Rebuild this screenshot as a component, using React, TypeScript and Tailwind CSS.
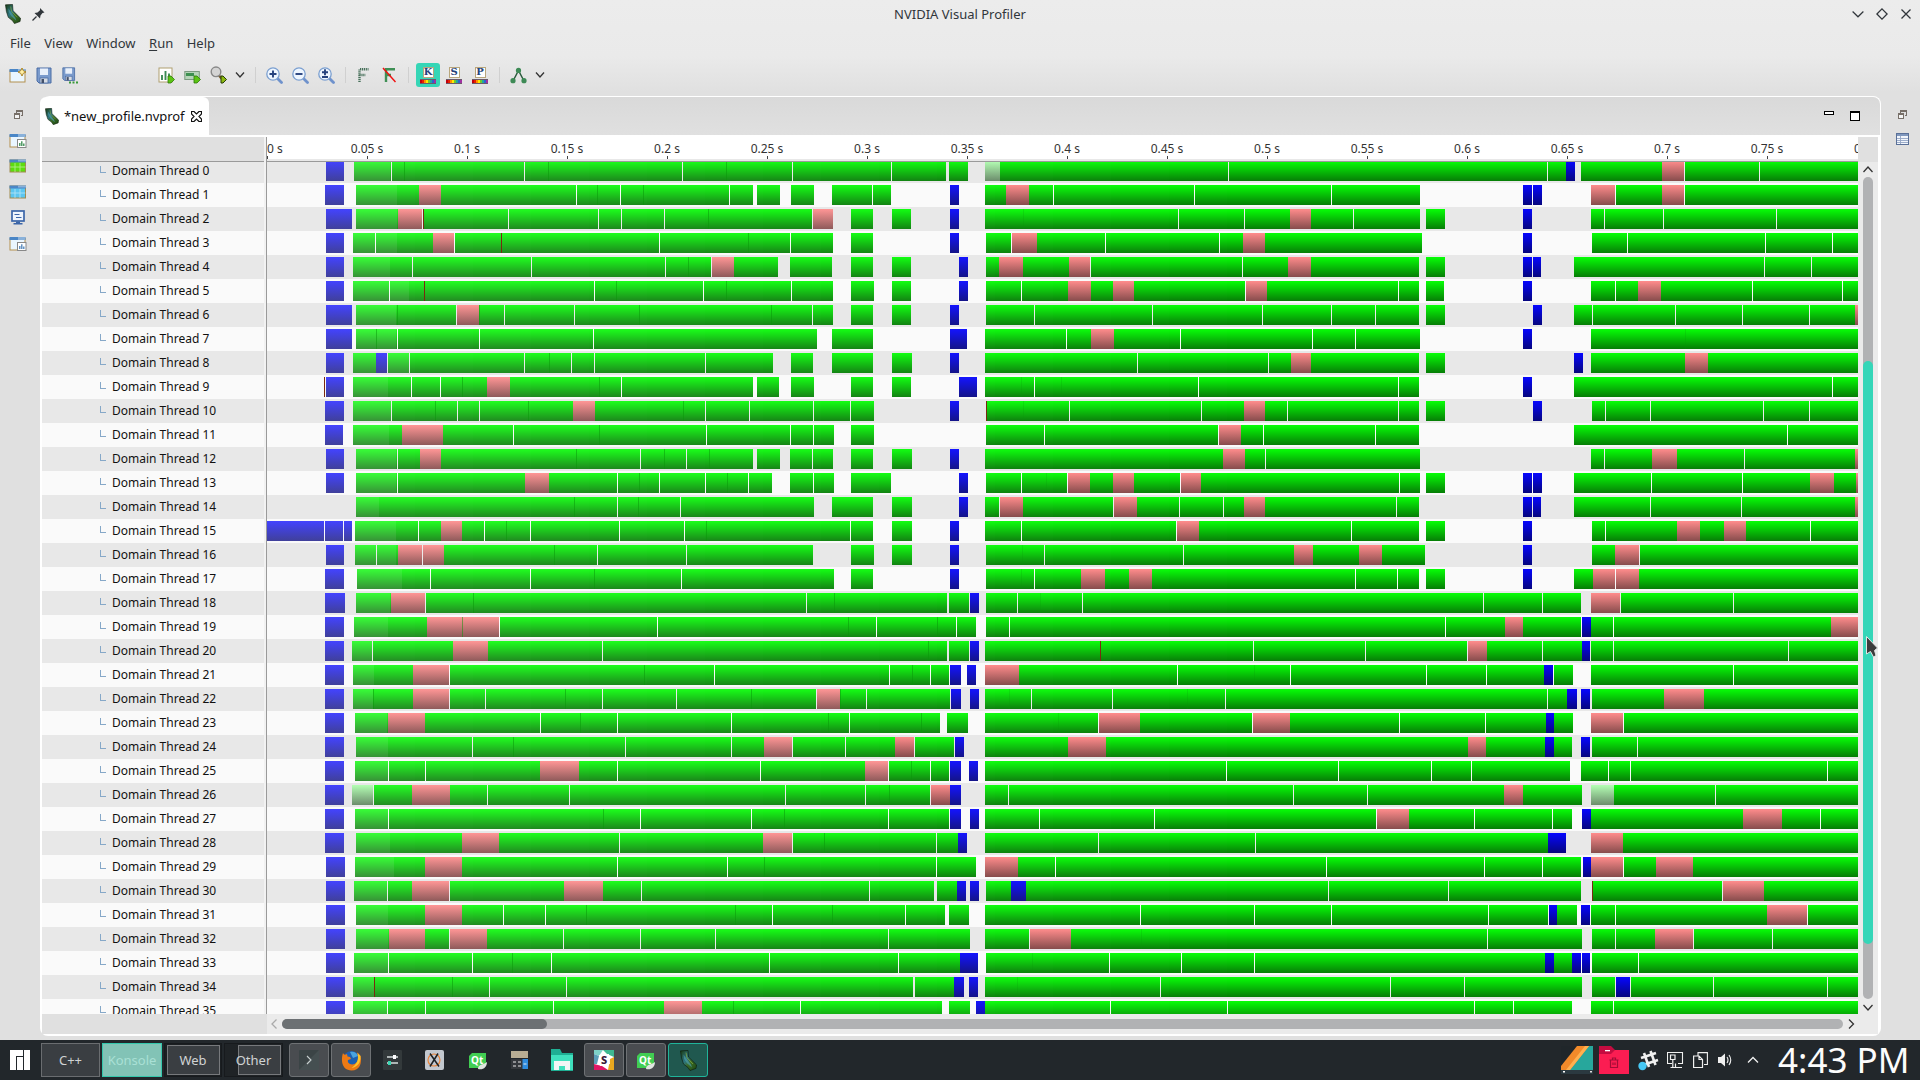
import React from "react";

type Shape = { kind: string; a: number; b: number };

/* Timeline traces. Every thread has two halves, sampled at different densities.
   g/b/p/w a-b : kernel, transfer, sync and idle spans; |a : gap; :a : seam; ra : marker; ~a : end of the pale lead-in */
const FIRST: string[] = [
  "b142-180 g202-1473 g1480-1521 w1557-1580 |283 |568 |908 |1144 |1357 :310 :620 :1002 ~281",
  "b140-180 g206-1059 g1068-1117 g1141-1190 g1229-1355 b1482-1501 p342-389 |680 |774 |1008 |1316 :725 :824 ~296",
  "b142-198 g206-1231 p296-348 p1188-1231 g1269-1317 g1358-1398 b1482-1501 |349 r351 |534 |727 |776 |869 |1187 :963 ~296",
  "b142-180 g200-1231 p372-417 g1269-1317 b1482-1501 |248 |418 r519 |858 |1140 :1049 ~296",
  "b142-180 g200-1113 p971-1018 g1138-1229 g1269-1317 g1358-1398 b1501-1521 |327 |583 |871 |970 :920 ~281",
  "b142-180 g200-1231 g1269-1319 g1358-1398 b1501-1521 |278 r353 |718 |953 |1142 :766 :1002 ~322",
  "b142-198 g206-1231 p423-471 g1269-1317 g1358-1398 b1482-1501 |422 |525 |676 |1187 :472 :815 :1099 :295 ~294",
  "b142-198 g206-1196 g1229-1317 b1482-1519 :250 |295 |472 |716 ~294",
  "b142-180 g200-1102 b249-273 g1141-1188 g1229-1317 g1358-1400 b1482-1501 |274 |321 |568 :622 |669 |718 |957 ~321",
  "b142-180 g200-1059 p488-537 g1068-1115 g1141-1190 g1269-1317 g1358-1398 b1501-1540 r138 |325 |388 :435 :729 |777 ~277",
  "b140-180 g200-1319 p672-720 b1482-1501 |283 :377 |424 |472 :577 :910 |957 |1051 |1189 |1268 ~282",
  "b140-178 g200-1233 p305-394 g1269-1319 |545 :729 |959 |1139 |1189 ~279",
  "b142-180 g206-1059 p343-389 g1068-1117 g1138-1231 g1269-1317 g1358-1400 b1482-1501 |295 :680 |817 :869 |916 :966 |1187 ~294",
  "b142-180 g206-1100 p570-621 g1138-1233 g1269-1355 b1501-1521 |295 |768 :815 |858 |957 :1004 |1049 |1189 ~294",
  "g206-1190 g1229-1317 g1358-1400 b1501-1521 :675 |768 :813 |903 ~256",
  "b15-198 g204-1317 p389-434 g1358-1400 b1482-1501 |138 |179 |341 |482 :529 |581 |772 |912 :959 |1268 ~294",
  "b142-180 g204-1188 p296-396 g1269-1319 g1358-1400 b1482-1501 |250 |349 :632 |725 |916 ~294",
  "b140-180 g208-1233 g1269-1317 b1482-1501 |366 |581 :718 |905 ~307",
  "b140-183 g206-1476 p281-354 g1480-1523 b1525-1544 |356 :459 |1174 :1234 ~281",
  "b140-180 g202-1538 p358-513 :435 |515 |854 :1264 |1324 :1455 |1496 ~277",
  "b140-180 g198-1476 p415-490 g1480-1523 b1525-1544 |242 |736 :1436 ~242",
  "b140-180 g200-1480 p328-406 b1482-1506 b1519-1538 |407 :826 |976 |1352 :1402 |1440 ~245",
  "b140-180 g200-1482 p329-406 p1196-1246 b1484-1506 b1525-1544 :244 |407 |484 :656 |736 |895 :1056 |1195 :1247 |1303 ~244",
  "b140-180 g204-1461 p274-354 g1476-1521 |602 :688 |768 |1013 :1221 |1266 :1421 ~274",
  "b140-180 g206-1491 p1083-1143 p1364-1405 b1493-1512 |457 :544 |785 |1013 |1144 |1258 |1406 ~277",
  "b140-180 g204-1480 p601-685 p1300-1349 b1482-1506 b1523-1542 |276 |356 |768 |1075 |1350 :1399 |1440 ~276",
  "b140-180 w198-243 g243-1440 p326-408 p1441-1482 b1482-1506 |244 |489 |665 |1129 |1301 :1352 |1440 ~200",
  "b140-180 g204-1480 b1482-1506 b1525-1544 |276 :738 |817 |1056 :1127 |1350 ~276",
  "b140-180 g206-1499 p434-513 p1080-1143 b1499-1519 |772 |1144 :1213 |1453 ~281",
  "b142-183 g204-1538 p354-434 |768 |1004 :1084 |1453 ~288",
  "b142-183 g202-1448 p326-406 p653-737 g1454-1497 b1497-1516 b1525-1544 |274 |407 |819 |1309 ~274",
  "b142-183 g206-1471 p354-434 g1480-1523 |523 |613 :701 :1021 |1101 :1230 |1386 ~277",
  "b142-183 g206-1525 p277-355 p408-488 |407 |652 |817 |978 |1350 ~277",
  "b142-183 g202-1504 b1504-1542 |276 |456 :542 |626 |1094 |1371 ~276",
  "b142-183 g200-1403 g1407-1491 b1491-1512 b1523-1542 r246 :413 |493 |658 ~246",
  "b142-183 g200-1465 p868-949 g1480-1525 b1538-1557 |274 |355 |630 :1017 |1161 ~274",
];

const SECOND: string[] = [
  "w26-51 g51-1016 b1016-1031 g1041-1513 p1179-1217 |440 |984 |1218 |1345",
  "g26-767 p61-101 b943-958 b960-975 g1058-1513 p1058-1099 p1179-1217 |142 |382 |616 |1100 |1218",
  "g26-767 p545-581 g777-810 b943-958 g1058-1513 |355 |468 |653 |1081 |1182 |1374 ;91",
  "g27-770 p72-114 p465-503 b943-958 g1060-1513 |71 |231 |425 |1120 |1356 |1470",
  "g27-765 p50-90 p169-205 p542-581 g777-810 b943-958 b960-973 g1029-1513 |206 |464 |1354 |1434",
  "g27-765 p167-206 p244-280 p470-506 g777-808 b943-958 g1058-1513 p1139-1178 |88 |469 |730 |1100 |1334 |1487",
  "g27-765 g777-810 b960-975 g1029-1513 p1508-1513 |110 |311 |498 |616 |691 |1061 |1202 |1316 |1431",
  "g26-767 p206-245 b943-958 g1058-1513 |164 |359 |584 |657 ;1220",
  "g26-765 p547-581 g777-810 b1029-1045 g1058-1513 p1219-1258 |285 |509",
  "g26-765 b943-958 g1029-1513 |110 |389 |730 |1470 ;88 ;156",
  "g27-765 p467-503 g777-810 b960-975 g1060-1513 r28 |169 |394 |541 |730 |1083 |1160 |1352 |1431 ;91",
  "g27-765 p424-462 g1029-1513 |127 |423 |500 |691 |1393",
  "g26-767 p431-469 g1058-1513 p1162-1205 p1508-1513 |503 |1081 |1320",
  "g27-767 p167-205 p244-280 p360-394 g777-810 b943-958 b960-975 g1029-1513 p1432-1473 p1510-1513 |88 |166 |359 |732 |1161 |1316 ;130",
  "g26-765 p51-90 p245-285 p467-503 b943-958 b960-973 g1029-1513 p1508-1513 |50 |244 |357 |432 |727 |1160 |1315",
  "g26-765 p353-390 g777-810 b943-958 g1060-1513 p1205-1244 p1285-1323 |88 |352 |650 |1083 |1432",
  "g27-775 p552-585 p663-702 b943-958 g1060-1513 p1099-1140 |127 |364 |1141 ;90",
  "g27-765 p190-230 p271-310 g777-810 b943-958 g1029-1513 p1062-1140 |110 |657 |728 |1100 ;88",
  "g27-1041 g1058-1513 p1058-1108 |81 |192 |875 |976 |1109 |1301 ;120",
  "g27-1041 p912-943 b1043-1058 g1058-1513 p1467-1513 |67 |810 |1097",
  "g26-1043 p849-881 b1043-1057 g1058-1513 r222 |483 |674 |848 |976 |1097 |1395",
  "g26-1028 p26-84 b978-994 g1058-1513 |354 |546 |778 |880 |995 |1301 ;485",
  "g26-1017 b1017-1035 b1041-1057 g1060-1513 p1183-1251 |105 |243 |435 |984 ;67 ;371",
  "g26-1028 p220-290 p482-546 b982-995 g1058-1513 p1058-1113 |219 |481 |732 |879 |1114 ;150",
  "g26-1026 p167-232 p848-879 b980-995 b1041-1057 g1060-1513 |1138",
  "g26-1023 g1041-1513 |438 |628 |786 |855 |1088 |1126 |1461",
  "g26-1043 p910-943 w1058-1098 g1098-1513 |65 |551 |677 |1270",
  "g26-1026 p694-748 b1043-1058 g1058-1513 p1317-1384 |118 |314 |693 |860 |993 |1449",
  "g26-985 b985-1016 g1058-1513 p1058-1113 |219 |486",
  "g26-1041 p26-82 b1045-1058 g1058-1513 p1058-1113 p1169-1232 |146 |607 |877 |976 |1114",
  "g27-1041 b70-95 g1060-1513 p1283-1353 |611 |815 r1061 |1282",
  "g26-1035 b987-1000 b1041-1057 g1058-1513 p1358-1427 |290 |485 |616 |884 |986 |1100 |1428",
  "g26-1043 p102-172 g1060-1513 p1167-1232 |101 |882 |1100 |1233 |1368 ;293",
  "g27-980 b980-995 g995-1026 b1026-1041 b1043-1057 g1060-1513 |238 |360 |485 |1139 ;106",
  "g26-1043 g1060-1513 b1101-1125 |325 |717 |843 |1100 |1126 |1267 |1461 ;81",
  "g26-1026 g1058-1513 |239 |439 |860 |926 |1097",
];

const ORIGIN = 267;

function parse(src: string, start: number, density: number): Shape[] {
  return src.split(" ").map((tok) => {
    const kind = tok[0];
    const [a, b] = tok.slice(1).split("-").map(Number);
    const at = (v: number) => start - ORIGIN + v / density;
    if (b === undefined) return { kind, a: Math.floor(at(a)), b: 0 };
    return { kind, a: Math.round(at(a)), b: Math.round(at(b)) };
  });
}

/* Green fades from a soft tone at the left to a saturated one at the right. */
const STEPS = 16;
const STEP_WIDTH = 58;
const tint = (i: number) => Math.round(36 - (30 * i) / (STEPS - 1));

function greenPieces(a: number, b: number, lead: number) {
  const out: { x: number; w: number; fill: string }[] = [];
  let x = a;
  if (x < lead && b > x) {
    const e = Math.min(b, lead);
    out.push({ x, w: e - x, fill: "url(#g-lead)" });
    x = e;
  }
  for (let i = 0; i < STEPS; i++) {
    const end = i === STEPS - 1 ? 1591 : 90 + (i + 1) * STEP_WIDTH;
    if (x < end && x < b) {
      const e = Math.min(b, end);
      out.push({ x, w: e - x, fill: `url(#g${i})` });
      x = e;
    }
  }
  return out;
}

function Track({ index }: { index: number }) {
  const shapes = [
    ...parse(FIRST[index], 260, 1568 / 730),
    ...parse(SECOND[index], 970, 1568 / 920),
  ];
  const lead = shapes.find((s) => s.kind === "~")?.a ?? 0;
  const spans = shapes.filter((s) => s.b > 0);
  const marks = shapes.filter((s) => s.b === 0 && s.kind !== "~");
  const order = (k: string) => (k === "g" ? 0 : 1);
  spans.sort((m, n) => order(m.kind) - order(n.kind));
  return (
    <svg width="1591" height="24" className={index % 2 ? "block shrink-0 bg-[#fafafa]" : "block shrink-0 bg-[#e8e8e8]"} shapeRendering="crispEdges">
      {spans.map((s, i) => {
        if (s.kind === "g")
          return greenPieces(s.a, s.b, lead).map((p, j) => (
            <rect key={`${i}-${j}`} x={p.x} y="2" width={p.w} height="20" fill={p.fill} />
          ));
        const fill =
          s.kind === "p"
            ? s.a < 600 ? "url(#p0)" : "url(#p1)"
            : s.kind === "w"
              ? "url(#w)"
              : s.a < 150 ? "url(#b0)" : s.a < 800 ? "url(#b1)" : "url(#b2)";
        return <rect key={i} x={s.a} y="2" width={s.b - s.a} height="20" fill={fill} />;
      })}
      {marks.map((m, i) => (
        <rect
          key={`m${i}`}
          x={m.a}
          y="2"
          width="1"
          height="20"
          fill={m.kind === "|" ? (index % 2 ? "#fafafa" : "#ececec") : m.kind === "r" ? "#7a2a10" : "#089608"}
          opacity={m.kind === ":" ? 0.5 : m.kind === ";" ? 0.2 : 1}
        />
      ))}
    </svg>
  );
}

function Grad({ id, top, bottom }: { id: string; top: string; bottom: string }) {
  return (
    <linearGradient id={id} x1="0" y1="0" x2="0" y2="1">
      <stop offset="0" stopColor={top} />
      <stop offset="1" stopColor={bottom} />
    </linearGradient>
  );
}

function Defs() {
  return (
    <svg width="0" height="0" className="absolute">
      <defs>
        <Grad id="g-lead" top="#37ff37" bottom="#379237" />
        {Array.from({ length: STEPS }, (_, i) => {
          const c = tint(i);
          return <Grad key={i} id={`g${i}`} top={`rgb(${c},255,${c})`} bottom={`rgb(${c},${122 + Math.round(c / 2)},${c})`} />;
        })}
        <Grad id="p0" top="#ff9696" bottom="#8e5a5a" />
        <Grad id="p1" top="#ff8c8c" bottom="#864c4c" />
        <Grad id="w" top="#b4ffb4" bottom="#6c8c6c" />
        <Grad id="b0" top="#4343ff" bottom="#40409a" />
        <Grad id="b1" top="#1414ff" bottom="#141488" />
        <Grad id="b2" top="#0606ff" bottom="#06067e" />
        <linearGradient id="cal" x1="0" x2="1" y1="0" y2="1">
          <stop offset="0" stopColor="#1c3d12" />
          <stop offset=".4" stopColor="#2c7480" />
          <stop offset=".6" stopColor="#3a6a28" />
          <stop offset="1" stopColor="#1d4a12" />
        </linearGradient>
      </defs>
    </svg>
  );
}

function California({ w = 17, h = 24 }: { w?: number; h?: number }) {
  return (
    <svg width={w} height={h} viewBox="0 0 17 24" preserveAspectRatio="none" className="block shrink-0">
      <path d="M.5 1 8 0.5 8.5 8 16.500 17 16 21 10 23.500 8 20 3.500 16 1.500 9Z" fill="url(#cal)" stroke="#0d1c0c" strokeWidth=".7" />
      <path d="M3.5 5 6.5 10 11 16.500 12 20 7 15 4 10Z" fill="#4c9aa6" opacity=".7" />
      <path d="M6 3 7 9 13 16" stroke="#8fae3a" strokeWidth="1" fill="none" opacity=".7" />
    </svg>
  );
}

function Chevron({ className = "" }: { className?: string }) {
  return (
    <svg width="10" height="8" viewBox="0 0 10 8" className={className}>
      <path d="M1 1.5 5 6 9 1.5" fill="none" stroke="#333" strokeWidth="1.3" />
    </svg>
  );
}

function Separator() {
  return <div className="h-4 w-px bg-[#d0d0d0]" />;
}

function Slot({ w, children }: { w: number; children?: React.ReactNode }) {
  return (
    <div className="flex h-6 shrink-0 items-center justify-center" style={{ width: w }}>
      {children}
    </div>
  );
}

const G = "#3d8a55";

function WindowIcon({ badge }: { badge?: "star" | "chart" | "bars" }) {
  return (
    <svg width="18" height="15" viewBox="0 0 18 15">
      <rect x="1" y="2.5" width="15" height="11.5" fill="#eaf6ff" stroke="#b3904e" />
      <rect x=".5" y="1" width="16" height="3" fill="#4a86c6" />
      <rect x="9" y="1" width="7" height="3" fill="#b4cfe8" opacity=".6" />
      {badge === "star" && <path d="M13 0 14.3 2.7 17 4 14.3 5.3 13 8 11.7 5.3 9 4 11.7 2.7Z" fill="#fff0a8" stroke="#a77a14" strokeWidth=".9" />}
      {(badge === "chart" || badge === "bars") && (
        <>
          <rect x="8.5" y="6.5" width="8.5" height="8" fill="#fff" stroke="#888" />
          <path d="M10.8 13V10M12.8 13V8.3M14.8 13V10.5" stroke={badge === "chart" ? "#348a4c" : "#4a80b8"} strokeWidth="1.3" />
        </>
      )}
    </svg>
  );
}

function SaveIcon({ dots = false }: { dots?: boolean }) {
  return (
    <svg width="17" height="17" viewBox="0 0 17 17">
      <g transform={dots ? "scale(.84)" : undefined}>
        <path d="M1 1H15V16H3L1 14Z" fill="#7b9bcc" stroke="#4a6ca4" />
        <rect x="4" y="1.5" width="8" height="6.5" fill="#e9f0fa" />
        <rect x="4" y="11" width="8" height="5" fill="#d7dce4" stroke="#4a6ca4" strokeWidth=".8" />
        <rect x="5.5" y="12" width="2.5" height="4" fill="#42506a" />
      </g>
      {dots && <path d="M7 15.5h2M10.5 15.5h2M14 15.5h2" stroke="#3a9a3a" strokeWidth="2" />}
    </svg>
  );
}

function RunBadge() {
  return <path d="M10 9 H13 L16.5 12.5 13 16 H10Z" fill="#5cc414" stroke="#2f7a0a" strokeWidth=".8" />;
}

function Magnifier({ sign }: { sign: string }) {
  return (
    <svg width="17" height="17" viewBox="0 0 17 17">
      <path d="M11.5 11.5 15.5 15.5" stroke="#6f92cc" strokeWidth="2.8" strokeLinecap="round" />
      <circle cx="7" cy="7" r="6.2" fill="#eef6ff" stroke="#7b9fd0" strokeWidth="1.3" />
      <path d={sign} stroke="#26427e" strokeWidth="1.9" fill="none" />
    </svg>
  );
}

const STRIPES = ["#c00010", "#e82000", "#ff9000", "#ffe800", "#70c830", "#20a8a0", "#3060d0", "#a030a0"];

function ColorMode({ letter }: { letter: string }) {
  return (
    <div className="flex flex-col items-center">
      <div className="flex h-[11px] w-[11px] items-center justify-center border border-[#b8a67c] bg-white font-['DejaVu_Serif'] text-[10px] leading-none font-bold text-[#24427c]">
        {letter}
      </div>
      <svg width="16" height="5" className="mt-px block" shapeRendering="crispEdges">
        <rect width="16" height="5" fill="#6a5a6a" />
        {STRIPES.map((c, i) => (
          <rect key={c} x={i * 2} y="1" width="2" height="3" fill={c} />
        ))}
      </svg>
    </div>
  );
}

function Toolbar() {
  return (
    <div className="flex h-9 items-center pl-[9px]">
      <Slot w={18}><WindowIcon badge="star" /></Slot>
      <Slot w={9} />
      <Slot w={17}><SaveIcon /></Slot>
      <Slot w={8} />
      <Slot w={19}><SaveIcon dots /></Slot>
      <Slot w={77} />
      <Slot w={18}>
        <svg width="17" height="17" viewBox="0 0 17 17">
          <rect x="1" y="1" width="13" height="14" fill="#fff" stroke="#b0a070" />
          <path d="M4 13V8M7.5 13V4M11 13V6.5" stroke={G} strokeWidth="1.9" />
          <RunBadge />
        </svg>
      </Slot>
      <Slot w={8} />
      <Slot w={18}>
        <svg width="17" height="17" viewBox="0 0 17 17">
          <rect x=".8" y="4.5" width="14.500" height="8" fill="#b6d4b8" stroke="#7c9a80" />
          <rect x="2" y="6" width="8" height="3" fill="#3d9050" />
          <RunBadge />
        </svg>
      </Slot>
      <Slot w={8} />
      <Slot w={18}>
        <svg width="17" height="18" viewBox="0 0 17 18">
          <path d="M8.500 9 12 13" stroke="#7a6030" strokeWidth="2.600" />
          <circle cx="6" cy="5.800" r="4.800" fill="#d4d4d4" stroke="#888" strokeWidth="1.400" />
          <path d="M11 10 H13 L16.500 13.500 13 17 H11Z" fill="#8cb810" stroke="#253c06" strokeWidth="1" />
        </svg>
      </Slot>
      <Slot w={8} />
      <Slot w={10}><Chevron /></Slot>
      <Slot w={10} />
      <Separator />
      <Slot w={9} />
      <Slot w={18}><Magnifier sign="M3.5 7H10.5M7 3.5V10.5" /></Slot>
      <Slot w={8} />
      <Slot w={18}><Magnifier sign="M3.5 7H10.5" /></Slot>
      <Slot w={8} />
      <Slot w={18}><Magnifier sign="M4 5.2H10M7 2.2V8.2M4 10H10" /></Slot>
      <Slot w={10} />
      <Separator />
      <Slot w={11} />
      <Slot w={12}>
        <svg width="11" height="14" viewBox="0 0 11 14">
          <path d="M1.500 14V1.200H10.500M1.500 7H7.500" fill="none" stroke="#47705a" strokeWidth="2.400" strokeDasharray="1.200 .7" />
        </svg>
      </Slot>
      <Slot w={12} />
      <Slot w={15}>
        <svg width="14" height="16" viewBox="0 0 14 16">
          <path d="M4 15V2.200H13M4 8H9" fill="none" stroke="#3f9055" strokeWidth="2.400" />
          <path d="M1 1 13.500 15" stroke="#f01010" strokeWidth="1.500" />
        </svg>
      </Slot>
      <Slot w={12} />
      <Separator />
      <Slot w={7} />
      <div className="flex h-6 w-6 items-center justify-center rounded-[3px] bg-[#35d6b6]"><ColorMode letter="K" /></div>
      <Slot w={6} />
      <Slot w={16}><ColorMode letter="S" /></Slot>
      <Slot w={10} />
      <Slot w={16}><ColorMode letter="P" /></Slot>
      <Slot w={11} />
      <Separator />
      <Slot w={10} />
      <Slot w={17}>
        <svg width="17" height="17" viewBox="0 0 17 17">
          <path d="M3 14 8.500 3.500 14 14" fill="none" stroke="#2a5a3c" strokeWidth="1.500" />
          <circle cx="8.500" cy="3.400" r="2.600" fill={G} />
          <circle cx="3" cy="13.700" r="2.600" fill={G} />
          <circle cx="14" cy="13.700" r="2.600" fill={G} />
        </svg>
      </Slot>
      <Slot w={8} />
      <Slot w={10}><Chevron /></Slot>
    </div>
  );
}

function RestoreIcon() {
  return (
    <svg width="9" height="9" viewBox="0 0 9 9" shapeRendering="crispEdges">
      <path d="M2.5 3V.5H8.5V5.5H6.5" fill="none" stroke="#776f68" />
      <rect x="2" y="0" width="7" height="2" fill="#776f68" />
      <rect x=".5" y="3.5" width="5" height="5" fill="#f4f4f4" stroke="#776f68" />
      <rect x="0" y="3" width="6" height="2" fill="#776f68" />
    </svg>
  );
}

function GridIcon({ fill }: { fill: string }) {
  return (
    <svg width="18" height="14" viewBox="0 0 18 14">
      <rect x="1" y="1" width="15.500" height="12" fill={fill} stroke="#a08c50" />
      <rect x=".5" y=".5" width="16.500" height="3" fill="#4a86c6" />
      <rect x="9" y=".5" width="8" height="2" fill="#b4cfe8" opacity=".6" />
      <path d="M1 8H16.500M6 4V13M11 4V13" stroke="#fff" strokeWidth=".9" opacity=".5" />
    </svg>
  );
}

function LeftRail() {
  return (
    <div className="flex w-10 flex-col items-center pt-[14px] pr-1">
      <RestoreIcon />
      <div className="mt-[14px] flex flex-col items-center">
        <div className="h-[26px]"><WindowIcon badge="chart" /></div>
        <div className="h-[26px]"><GridIcon fill="#5ddc10" /></div>
        <div className="h-[26px]"><GridIcon fill="#5cc6f0" /></div>
        <div className="-mt-px h-[26px]">
          <svg width="16" height="15" viewBox="0 0 16 15">
            <rect x="2" y="1" width="12" height="10" fill="#eef4fc" stroke="#3b65a8" strokeWidth="1.700" />
            <path d="M4.500 4.500H9.500M6 7.500H11.500" stroke="#3b65a8" strokeWidth="1.100" />
            <path d="M6 11.500H10V13H12.500V14.500H3.500V13H6Z" fill="#3b65a8" />
          </svg>
        </div>
        <div className="h-[26px]"><WindowIcon badge="bars" /></div>
      </div>
    </div>
  );
}

function Ruler() {
  const ticks = Array.from({ length: 17 }, (_, i) => i);
  const label = (i: number) => `${Number((i * 0.05).toFixed(2))} s`;
  return (
    <div className="flex h-[22px] overflow-hidden">
      <div className="w-[50px] shrink-0">
        <span className="mt-px block text-[12px] leading-[22px] whitespace-nowrap">0 s</span>
      </div>
      {ticks.slice(1).map((i) => (
        <div key={i} className="flex w-[100px] shrink-0 justify-center">
          <span className="mt-px text-[12px] leading-[22px] whitespace-nowrap">{label(i)}</span>
        </div>
      ))}
    </div>
  );
}

function Ticks() {
  return (
    <div className="flex h-[3px]">
      {Array.from({ length: 16 }, (_, i) => (
        <div key={i} className={i === 15 ? "h-[3px] w-[91px] shrink-0 border-l border-[#444]" : "h-[3px] w-[100px] shrink-0 border-l border-[#444]"} />
      ))}
    </div>
  );
}

function Editor() {
  const rows = Array.from({ length: 36 }, (_, i) => i);
  return (
    <div className="flex h-[940px] w-[1841px] flex-col rounded-[8px] rounded-tl-[10px] border-t border-r border-white bg-white">
      <div className="flex h-[38px] rounded-t-[7px] bg-gradient-to-b from-[#d9d9d9] to-[#e0e0e0]">
        <div className="flex h-full w-[169px] items-center rounded-t-[6px] bg-white pl-[5px] text-[#222]">
          <California w={14} h={17} />
          <span className="mt-[2px] ml-[5px] text-[13px] tracking-[-0.04px] whitespace-nowrap text-[#111]">*new_profile.nvprof</span>
          <svg width="11" height="11" viewBox="0 0 11 11" className="ml-[6px]">
            <path d="M.5.5H3L5.500 3 8 .5H10.500V3L8 5.500 10.500 8V10.500H8L5.500 8 3 10.500H.5V8L3 5.500.5 3Z" fill="#fff" stroke="#111" strokeWidth="1.200" />
          </svg>
        </div>
        <div className="ml-auto flex items-start pt-[14px] pr-[20px]">
          <div className="mr-4 h-1 w-[10px] border border-black bg-white" />
          <div className="h-[10px] w-[10px] border border-t-2 border-black bg-white" />
        </div>
      </div>
      <div className="mt-[2px] ml-[2px] flex h-[897px] w-[1836px] flex-col">
        <div className="flex h-[877px]">
          <div className="flex w-[222px] flex-col">
            <div className="h-[25px] border-b border-[#9a9a9a] bg-[#e0e0e0]" />
            <div className="h-[852px] overflow-hidden">
              <div className="-mt-[3px]">
                {rows.map((i) => (
                  <div key={i} className={i % 2 ? "flex h-6 items-center bg-[#fafafa]" : "flex h-6 items-center bg-[#e8e8e8]"}>
                    <div className="-mt-[3px] ml-[58px] h-[7px] w-[6px] border-b border-l border-[#86a8c8]" />
                    <span className="ml-[6px] text-[12px] leading-none whitespace-nowrap text-[#111]">Domain Thread {i}</span>
                  </div>
                ))}
              </div>
            </div>
          </div>
          <div className="w-[2px] bg-[#f2f2f2]" />
          <div className="w-px bg-[#9a9a9a]" />
          <div className="flex w-[1591px] flex-col overflow-hidden">
            <div className="h-[25px] border-b border-[#9a9a9a] bg-white text-[#333]">
              <div className="h-[19px]"><Ruler /></div>
              <Ticks />
              <div className="h-[2px] bg-[#e8e8e8]" />
            </div>
            <div className="h-[852px] overflow-hidden">
              <div className="-mt-[3px]">
                {rows.map((i) => <Track key={i} index={i} />)}
              </div>
            </div>
          </div>
          <div className="flex w-5 flex-col items-center bg-[#ebebeb]">
            <div className="h-[25px] w-5 bg-[#e0e0e0]" />
            <svg width="12" height="15" viewBox="0 0 12 15" className="shrink-0"><path d="M1.500 10 6 5 10.500 10" fill="none" stroke="#333" strokeWidth="1.300" /></svg>
            <div className="h-[822px] w-[10px] rounded-full bg-[#b1b2b4] pt-[184px]">
              <div className="h-[583px] rounded-full bg-[#35d6b8]" />
            </div>
            <svg width="12" height="15" viewBox="0 0 12 15" className="shrink-0"><path d="M1.500 6 6 11 10.500 6" fill="none" stroke="#333" strokeWidth="1.300" /></svg>
          </div>
        </div>
        <div className="flex h-5">
          <div className="w-[225px] bg-[#e0e0e0]" />
          <div className="flex w-[1611px] items-center bg-[#ebebeb]">
            <svg width="15" height="12" viewBox="0 0 15 12"><path d="M9.500 1.500 5 6 9.500 10.500" fill="none" stroke="#aaa" strokeWidth="1.300" /></svg>
            <div className="h-[10px] w-[1561px] rounded-full bg-[#b1b2b4]">
              <div className="h-[10px] w-[265px] rounded-full bg-[#6c7073]" />
            </div>
            <svg width="15" height="12" viewBox="0 0 15 12"><path d="M6 1.500 10.500 6 6 10.500" fill="none" stroke="#333" strokeWidth="1.300" /></svg>
          </div>
        </div>
      </div>
    </div>
  );
}

function RightRail() {
  return (
    <div className="flex w-[39px] flex-col items-center pt-[14px] pl-[4px]">
      <RestoreIcon />
      <svg width="13" height="12" viewBox="0 0 13 12" className="mt-[14px]">
        <rect x=".5" y=".5" width="12" height="11" fill="#f2f6fc" stroke="#5a7098" />
        <rect x="1" y="1" width="11" height="2" fill="#7f97bd" />
        <path d="M1 5.500H12M1 7.500H12M1 9.500H12M4.500 3V11" stroke="#93a5c4" strokeWidth=".9" />
      </svg>
    </div>
  );
}

function TaskButton({ active = false, children }: { active?: boolean; children: React.ReactNode }) {
  return (
    <div className={active ? "flex h-[34px] w-10 items-center justify-center rounded-[3px] border border-[#20b49a] bg-[#20584f]" : "flex h-[34px] w-10 items-center justify-center rounded-[3px] border border-[#6e7174] bg-[#494c50]"}>
      {children}
    </div>
  );
}

function QtIcon() {
  return (
    <svg width="20" height="20" viewBox="0 0 20 20">
      <path d="M4 3H18V14L14 18H1V6Z" fill="#41cd52" />
      <text x="3" y="14" fontFamily="Noto Sans" fontSize="10" fontWeight="700" fill="#fff">Qt</text>
      <path d="M10 19C10 14 15 15 19 12C19 17 15 20.500 10 19Z" fill="#dfe4e0" />
    </svg>
  );
}

function SlackIcon() {
  return (
    <svg width="20" height="20" viewBox="0 0 20 20">
      <rect width="20" height="20" fill="#fff" />
      <path d="M0 0H9L5 6 0 4Z" fill="#7fd3c8" />
      <path d="M9 0H20V7L13 4Z" fill="#3eb991" />
      <path d="M20 7V20H14L16 9Z" fill="#e9a820" />
      <path d="M14 20H0V14L8 16Z" fill="#e01765" />
      <path d="M0 4 5 6 3 14H0Z" fill="#5a9fb8" />
      <path d="M5 5 15 4 16 14 6 16Z" fill="#fff" />
      <text x="7" y="14" fontFamily="Noto Sans" fontSize="11" fontWeight="800" fill="#3a1838">S</text>
    </svg>
  );
}

function Taskbar() {
  return (
    <div className="flex h-10 items-center bg-[#22272b] text-[#d0d3d4]">
      <svg width="20" height="20" viewBox="0 0 20 20" className="ml-[10px]" shapeRendering="crispEdges">
        <path d="M0 0H13V6H6V20H0ZM7 7H13V20H7ZM14 0H20V20H14Z" fill="#fff" />
      </svg>
      <div className="ml-[11px] flex h-[34px] w-[59px] items-center justify-center border border-[#6a6d70] bg-[#3a3e42] pt-px text-[13px]">C++</div>
      <div className="ml-[2px] flex h-[34px] w-[60px] items-center justify-center border border-[#35c8ad] bg-[#82c3b6] pt-px text-[13px] text-[#a9e0d5]">Konsole</div>
      <div className="ml-[2px] flex h-[34px] w-[58px] items-center justify-center border border-[#171a1d] bg-[#1b1f22] text-[13px]">
        <div className="flex h-[30px] w-[53px] items-center justify-center border border-[#77797c] bg-[#3a3e42] pt-px">Web</div>
      </div>
      <div className="ml-[2px] flex h-[34px] w-[59px] items-center justify-end border border-[#171a1d] bg-[#1f2326] pr-px text-[13px]">
        <div className="flex h-[30px] w-[43px] items-center justify-center border border-[#77797c] bg-[#3a3e42]">
          <span className="mt-px -ml-[12px] leading-none">Other</span>
        </div>
      </div>
      <div className="ml-[6px] flex items-center">
        <TaskButton>
          <svg width="20" height="20" viewBox="0 0 20 20"><rect width="20" height="20" rx="1" fill="#3b4446" /><path d="M0 20 20 0V20Z" fill="#4d5759" opacity=".6" /><path d="M8 6 12 10 8 14" stroke="#c8d0d0" fill="none" strokeWidth="1.100" /></svg>
        </TaskButton>
        <div className="w-[2px]" />
        <TaskButton>
          <svg width="21" height="21" viewBox="0 0 21 21">
            <circle cx="10.500" cy="10" r="9" fill="#1d5fb0" />
            <path d="M9 2C13 1 16 3 17 6L12 8Z" fill="#49a4e0" />
            <path d="M2 3C0 9 0 20 10.500 20.500 19 20.500 21 13 19.500 6 18.500 4 17 3 16 2.500 18 7 17.500 12 13.500 14 9 15.500 6 12.500 7 10L10 9 9 7 6.500 6.500 6 4C4 5 3 5 2 3Z" fill="#ee7a14" />
            <path d="M19.500 6C20 12 17 17 10.500 18 16 14 18 10 16.500 3Z" fill="#fcc42c" />
          </svg>
        </TaskButton>
      </div>
      <svg width="19" height="20" viewBox="0 0 19 20" className="ml-[12px]"><rect width="19" height="20" rx="1" fill="#33393b" /><path d="M4 7H15M4 13H15" stroke="#d8dede" strokeWidth="1.300" /><rect x="10" y="5" width="3" height="4" fill="#fff" /><rect x="5" y="11" width="3" height="4" fill="#3bd6b4" /></svg>
      <svg width="19" height="20" viewBox="0 0 19 20" className="ml-[23px]"><rect width="19" height="20" rx="2" fill="#c3c8cf" /><circle cx="9" cy="10" r="6" fill="none" stroke="#e8833a" strokeWidth="1.200" /><path d="M5 3.500 14 16.500M13 3.500 5 16.500" stroke="#1d2124" strokeWidth="1.500" /></svg>
      <div className="ml-[24px]"><QtIcon /></div>
      <svg width="18" height="20" viewBox="0 0 18 20" className="ml-[23px]">
        <rect y="1" width="17" height="7" fill="#b8ad94" /><rect y="9" width="17" height="10" fill="#34373c" /><rect x="11.500" y="9" width="5.500" height="10" fill="#2f8de0" />
        <path d="M2 12H5M7 12H10M2 16H5M7 16H10M12.500 14H15.500" stroke="#e8e8e8" strokeWidth="1.200" />
      </svg>
      <svg width="23" height="22" viewBox="0 0 23 22" className="ml-[22px]"><path d="M0 0H9L11 4H22V22H0Z" fill="#1fae93" /><path d="M0 6H22V21H0Z" fill="#3fe0bd" /><path d="M3 21V12H19V21H14V17H8V21Z" fill="#f2f5f5" /></svg>
      <div className="ml-[10px] flex gap-[2px]">
        <TaskButton><SlackIcon /></TaskButton>
        <TaskButton><QtIcon /></TaskButton>
        <TaskButton active><California w={17} h={21} /></TaskButton>
      </div>
      <div className="ml-auto flex items-center">
        <svg width="32" height="28" viewBox="0 0 32 28"><rect width="32" height="28" fill="#20262a" /><path d="M24 0H32V24H7Z" fill="#27a79c" /><path d="M16 0H28L9 24H0V20Z" fill="#f28a2a" /><path d="M24 0H28L9 24H5Z" fill="#ffb050" /><path d="M0 24H32V28H0Z" fill="#2b3940" /><rect x="2" y="25" width="2" height="1.500" fill="#fff" /><rect x="29" y="25" width="2" height="1.500" fill="#ddd" /></svg>
        <svg width="30" height="28" viewBox="0 0 30 28" className="ml-[6px]"><path d="M0 0H12L16 4H30V28H0Z" fill="#c40c40" /><path d="M0 8H12L16 4H30V28H0Z" fill="#fb1d52" /><rect x="6" y="4" width="5" height="1.300" fill="#fff" /><path d="M10.500 14H19.500M11.500 14V21.500H18.500V14M13.500 14V12H16.500V14M14 16.500V19M16 16.500V19" stroke="#a30c36" fill="none" strokeWidth="1.200" /></svg>
        <svg width="21" height="22" viewBox="0 0 21 22" className="ml-[9px]"><g stroke="#f0f0f0" strokeWidth="2.600"><path d="M6 4 11 18M12.500 2 17.500 16M3 9 18 4M5 16 20 11" /></g><circle cx="4.500" cy="17" r="4.200" fill="#46c8f5" /></svg>
        <svg width="17" height="17" viewBox="0 0 17 17" className="ml-[8px]"><path d="M5 11.500H.5V.5H15.500V11.500H11" fill="none" stroke="#f0f0f0" strokeWidth="1.100" /><path d="M3.500 3H8V7.500H3.500ZM5.800 7.500V15.500M3.500 15.500H8M8.500 11.500V15.500H15" fill="none" stroke="#f0f0f0" strokeWidth="1.200" /></svg>
        <svg width="15" height="17" viewBox="0 0 15 17" className="ml-[9px]"><path d="M5 4V.6H14.400V12.500H11" fill="none" stroke="#f0f0f0" strokeWidth="1.100" /><path d="M.6 4H6L9.500 7.500V15.500H.6ZM6 4V7.500H9.500" fill="none" stroke="#f0f0f0" strokeWidth="1.200" /></svg>
        <svg width="14" height="14" viewBox="0 0 14 14" className="ml-[10px]"><path d="M0 4H3L7 .5V13.500L3 10H0Z" fill="#f0f0f0" /><path d="M9 4Q11 7 9 10M11 2Q14.500 7 11 12" stroke="#f0f0f0" fill="none" strokeWidth="1.100" /></svg>
        <svg width="12" height="8" viewBox="0 0 12 8" className="ml-[15px]"><path d="M1 6.500 6 1.500 11 6.500" fill="none" stroke="#f0f0f0" strokeWidth="1.300" /></svg>
        <span className="mr-[14px] ml-[19px] w-[128px] text-[35px] leading-10 whitespace-nowrap text-[#fcfcfc]">4:43 PM</span>
      </div>
    </div>
  );
}

export default function App() {
  return (
    <div className="relative flex h-[1080px] w-[1920px] flex-col overflow-hidden bg-[#e0e0e0] font-['Noto_Sans',sans-serif] text-[13px] text-[#31363b]">
      <Defs />
      <div className="flex h-24 flex-col bg-[linear-gradient(#ececec_0px,#eaeaea_56px,#e0e0e0_92px)]">
        <div className="grid h-[28px] grid-cols-[1fr_auto_1fr] items-center">
          <div className="flex items-center pl-[5px]">
            <California w={16} h={20} />
            <svg width="13" height="13" viewBox="0 0 13 13" className="ml-[11px]"><path d="M8 0 12.500 4.500 10.500 5 8.500 7.500 8 10.500 2.500 5 5.500 4.500 8 2.300Z" fill="#31363b" /><path d="M4.500 8.500.5 12.500" stroke="#31363b" strokeWidth="1.300" /></svg>
          </div>
          <div className="pt-[2px]">NVIDIA Visual Profiler</div>
          <div className="flex items-center justify-end gap-[12px] pr-[8px]">
            <svg width="12" height="8" viewBox="0 0 12 8"><path d="M.6 1.500 6 6.800 11.400 1.500" fill="none" stroke="#31363b" strokeWidth="1.200" /></svg>
            <svg width="12" height="12" viewBox="0 0 12 12"><path d="M6 .9 11.100 6 6 11.100.9 6Z" fill="none" stroke="#31363b" strokeWidth="1.300" /></svg>
            <svg width="12" height="12" viewBox="0 0 12 12"><path d="M1.500 1.500 10.500 10.500M10.500 1.500 1.500 10.500" fill="none" stroke="#31363b" strokeWidth="1.300" /></svg>
          </div>
        </div>
        <div className="flex h-[29px] items-center gap-[13.5px] pt-[2px] pl-[10px]">
          <span>File</span>
          <span>View</span>
          <span>Window</span>
          <span><span className="underline underline-offset-2">R</span>un</span>
          <span>Help</span>
        </div>
        <Toolbar />
      </div>
      <div className="flex h-[944px]">
        <LeftRail />
        <Editor />
        <RightRail />
      </div>
      <Taskbar />
      <svg width="14" height="24" viewBox="0 0 14 24" className="absolute top-[635px] left-[1865px]">
        <path d="M1.500 1.500V19L5.500 16.500 8.500 22 11 20.500 9.500 15.500 12.500 13Z" fill="#3c3c3c" stroke="#e4e4e4" strokeWidth="1" />
      </svg>
    </div>
  );
}
